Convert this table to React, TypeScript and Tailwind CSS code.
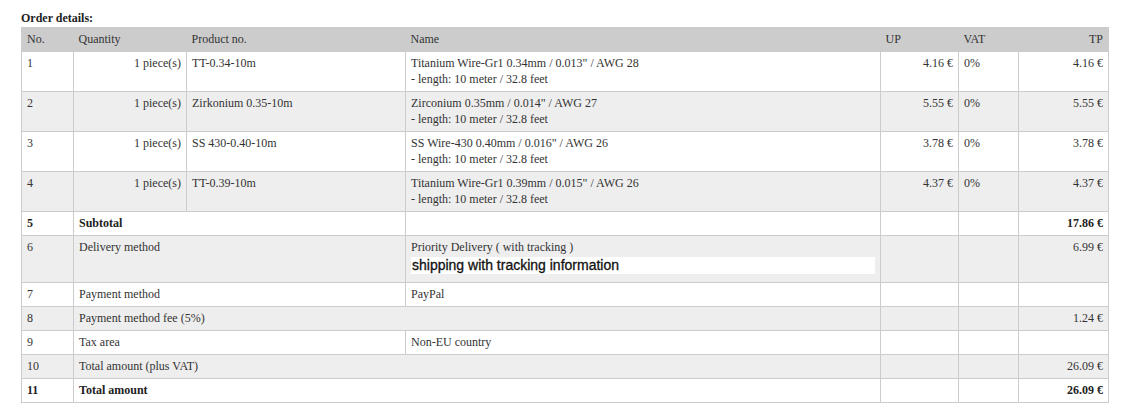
import React from "react"

type Item = {
  no: string
  qty: string
  product: string
  name: string
  length: string
  up: string
  vat: string
  tp: string
}

const items: Item[] = [
  { no: "1", qty: "1 piece(s)", product: "TT-0.34-10m", name: 'Titanium Wire-Gr1 0.34mm / 0.013" / AWG 28', length: "- length: 10 meter / 32.8 feet", up: "4.16 €", vat: "0%", tp: "4.16 €" },
  { no: "2", qty: "1 piece(s)", product: "Zirkonium 0.35-10m", name: 'Zirconium 0.35mm / 0.014" / AWG 27', length: "- length: 10 meter / 32.8 feet", up: "5.55 €", vat: "0%", tp: "5.55 €" },
  { no: "3", qty: "1 piece(s)", product: "SS 430-0.40-10m", name: 'SS Wire-430 0.40mm / 0.016" / AWG 26', length: "- length: 10 meter / 32.8 feet", up: "3.78 €", vat: "0%", tp: "3.78 €" },
  { no: "4", qty: "1 piece(s)", product: "TT-0.39-10m", name: 'Titanium Wire-Gr1 0.39mm / 0.015" / AWG 26', length: "- length: 10 meter / 32.8 feet", up: "4.37 €", vat: "0%", tp: "4.37 €" },
]

const td = "border border-[#cccccc] px-[5px] pt-[3px] pb-[4px] align-top font-['Liberation_Serif','Times_New_Roman',serif]"
const th = "px-[5px] pt-[3px] pb-[4px] font-normal text-left font-['Liberation_Serif','Times_New_Roman',serif]"

const App = () => {
  return (
    <div className="pl-[21px] pt-[10px] text-[12px] leading-[16px] text-[#333333] font-['Liberation_Serif','Times_New_Roman',serif]">
      <div className="font-bold text-[#222222] mb-[1px]">Order details:</div>
      <table className="w-[1087px] table-fixed border-collapse">
        <colgroup>
          <col className="w-[52px]" />
          <col className="w-[113px]" />
          <col className="w-[219px]" />
          <col className="w-[475px]" />
          <col className="w-[78px]" />
          <col className="w-[60px]" />
          <col className="w-[90px]" />
        </colgroup>
        <thead>
          <tr className="bg-[#cccccc] border border-[#cccccc]">
            <th className={th}>No.</th>
            <th className={th}>Quantity</th>
            <th className={th}>Product no.</th>
            <th className={th}>Name</th>
            <th className={th}>UP</th>
            <th className={th}>VAT</th>
            <th className={`${th} text-right`}>TP</th>
          </tr>
        </thead>
        <tbody>
          {items.map((it, i) => (
            <tr key={it.no} className={i % 2 === 1 ? "bg-[#eeeeee]" : "bg-white"}>
              <td className={td}>{it.no}</td>
              <td className={`${td} text-right`}>{it.qty}</td>
              <td className={td}>{it.product}</td>
              <td className={td}>
                {it.name}
                <br />
                {it.length}
              </td>
              <td className={`${td} text-right`}>{it.up}</td>
              <td className={td}>{it.vat}</td>
              <td className={`${td} text-right`}>{it.tp}</td>
            </tr>
          ))}
          <tr className="bg-white font-bold text-[#222222]">
            <td className={td}>5</td>
            <td className={td} colSpan={2}>Subtotal</td>
            <td className={td}></td>
            <td className={td}></td>
            <td className={td}></td>
            <td className={`${td} text-right`}>17.86 €</td>
          </tr>
          <tr className="bg-[#eeeeee]">
            <td className={td}>6</td>
            <td className={td} colSpan={2}>Delivery method</td>
            <td className={td}>
              <div>Priority Delivery ( with tracking )</div>
              <div className="mt-[2px] mb-[4px] h-[17px] bg-white pl-[1px] text-[14px] leading-[17px] font-normal text-[#111111] [-webkit-text-stroke:0.3px_#111111] font-['Liberation_Sans',Arial,sans-serif]">
                shipping with tracking information
              </div>
            </td>
            <td className={td}></td>
            <td className={td}></td>
            <td className={`${td} text-right`}>6.99 €</td>
          </tr>
          <tr className="bg-white">
            <td className={td}>7</td>
            <td className={td} colSpan={2}>Payment method</td>
            <td className={td}>PayPal</td>
            <td className={td}></td>
            <td className={td}></td>
            <td className={td}></td>
          </tr>
          <tr className="bg-[#eeeeee]">
            <td className={td}>8</td>
            <td className={td} colSpan={3}>Payment method fee (5%)</td>
            <td className={td}></td>
            <td className={td}></td>
            <td className={`${td} text-right`}>1.24 €</td>
          </tr>
          <tr className="bg-white">
            <td className={td}>9</td>
            <td className={td} colSpan={2}>Tax area</td>
            <td className={td}>Non-EU country</td>
            <td className={td}></td>
            <td className={td}></td>
            <td className={td}></td>
          </tr>
          <tr className="bg-[#eeeeee]">
            <td className={td}>10</td>
            <td className={td} colSpan={3}>Total amount (plus VAT)</td>
            <td className={td}></td>
            <td className={td}></td>
            <td className={`${td} text-right`}>26.09 €</td>
          </tr>
          <tr className="bg-white font-bold text-[#222222]">
            <td className={td}>11</td>
            <td className={td} colSpan={3}>Total amount</td>
            <td className={td}></td>
            <td className={td}></td>
            <td className={`${td} text-right`}>26.09 €</td>
          </tr>
        </tbody>
      </table>
    </div>
  )
}

export default App
